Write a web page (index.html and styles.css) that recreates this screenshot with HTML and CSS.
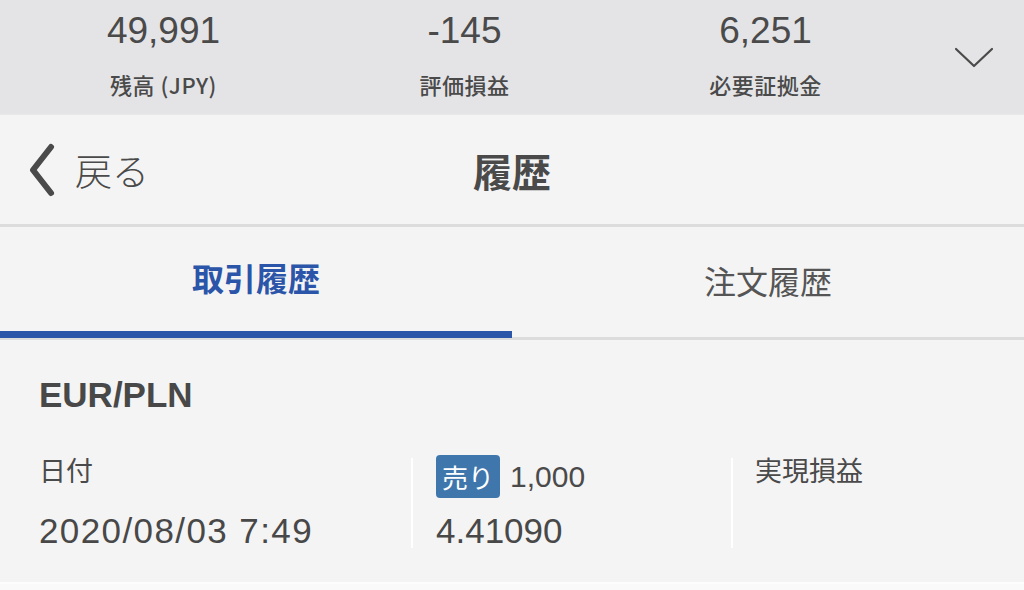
FILE: index.html
```html
<!DOCTYPE html>
<html lang="ja">
<head>
<meta charset="utf-8">
<link rel="stylesheet" href="styles.css">
</head>
<body>
<div class="summary">
  <div class="stat"><div class="num">49,991</div><div class="label">残高 (JPY)</div></div>
  <div class="stat"><div class="num">-145</div><div class="label">評価損益</div></div>
  <div class="stat"><div class="num">6,251</div><div class="label">必要証拠金</div></div>
  <div class="toggle">
    <svg width="40" height="22" viewBox="0 0 40 22"><path d="M2 2 L20 19 L38 2" fill="none" stroke="#4a4a4a" stroke-width="2.2" stroke-linecap="round" stroke-linejoin="round"/></svg>
  </div>
</div>
<div class="navbar">
  <div class="back">
    <svg width="30" height="54" viewBox="0 0 30 54"><path d="M24 4 L6 27 L24 50" fill="none" stroke="#4a4a4a" stroke-width="6" stroke-linecap="round" stroke-linejoin="round"/></svg>
    <span>戻る</span>
  </div>
  <div class="title">履歴</div>
</div>
<div class="tabs">
  <div class="tab active">取引履歴</div>
  <div class="tab">注文履歴</div>
</div>
<div class="card">
  <div class="pair">EUR/PLN</div>
  <div class="cols">
    <div class="col first">
      <div class="lbl">日付</div>
      <div class="val date">2020/08/03 7:49</div>
    </div>
    <div class="col mid">
      <div class="lbl row"><span class="badge">売り</span><span class="qty">1,000</span></div>
      <div class="val">4.41090</div>
    </div>
    <div class="col last">
      <div class="lbl">実現損益</div>
    </div>
  </div>
</div>
<div class="bottom"></div>
</body>
</html>
```
FILE: styles.css
```css
html, body {
  margin: 0;
  padding: 0;
}
body {
  width: 1024px;
  height: 590px;
  overflow: hidden;
  background: #f4f4f4;
  font-family: "Liberation Sans", "Noto Sans CJK JP", sans-serif;
  color: #4a4a4a;
}
.summary {
  height: 114px;
  background: #e4e4e6;
  display: grid;
  grid-template-columns: 301px 301px 301px 1fr;
  padding-left: 13px;
  border-bottom: 1px solid #e8e8e8;
}
.stat {
  display: flex;
  flex-direction: column;
  align-items: center;
}
.num {
  font-size: 37px;
  line-height: 40px;
  margin-top: 11px;
  color: #4a4a4a;
}
.label {
  font-family: "Noto Sans CJK JP", sans-serif;
  font-size: 22px;
  font-weight: 500;
  line-height: 30px;
  margin-top: 18px;
  color: #4a4a4a;
  letter-spacing: 0.5px;
}
.toggle {
  display: flex;
  justify-content: flex-end;
  padding-right: 30px;
  padding-top: 47px;
}
.navbar {
  height: 109px;
  border-bottom: 3px solid #dcdcdc;
  display: flex;
  align-items: center;
  position: relative;
  background: #f4f4f4;
}
.back {
  display: flex;
  align-items: center;
  padding-left: 27px;
  gap: 18px;
}
.back span {
  font-family: "Noto Sans CJK JP", sans-serif;
  font-size: 37px;
  font-weight: 300;
  color: #4a4a4a;
}
.title {
  position: absolute;
  left: 0;
  right: 0;
  text-align: center;
  font-family: "Noto Sans CJK JP", sans-serif;
  font-size: 39px;
  font-weight: 700;
  color: #4a4a4a;
  pointer-events: none;
}
.tabs {
  display: grid;
  grid-template-columns: 512px 512px;
  height: 110px;
  border-bottom: 3px solid #dcdcdc;
  background: #f4f4f4;
}
.tab {
  display: flex;
  align-items: center;
  justify-content: center;
  padding-bottom: 4px;
  font-family: "Noto Sans CJK JP", sans-serif;
  font-size: 32px;
  color: #555;
  font-weight: 400;
  box-sizing: border-box;
}
.tab.active {
  color: #2b55a8;
  font-weight: 700;
  border-bottom: 7px solid #2b55a8;
  margin-bottom: -1px;
}
.card {
  height: 242px;
  background: #f4f4f4;
  box-sizing: border-box;
  padding: 0 0 0 39px;
}
.pair {
  padding-top: 34px;
  font-size: 35px;
  font-weight: 700;
  line-height: 42px;
  color: #484848;
}
.cols {
  display: grid;
  grid-template-columns: 372px 320px 1fr;
  margin-top: 42px;
}
.col {
  height: 90px;
  display: flex;
  flex-direction: column;
}
.col.mid, .col.last {
  border-left: 2px solid #ffffff;
  padding-left: 23px;
}
.col.last {
  padding-left: 22px;
}
.lbl {
  font-family: "Noto Sans CJK JP", sans-serif;
  font-size: 27px;
  line-height: 30px;
  color: #4a4a4a;
  margin-top: -3px;
}
.lbl.row {
  display: flex;
  align-items: center;
  gap: 10px;
  margin-top: -3px;
}
.badge {
  background: #3f77ad;
  color: #fff;
  border-radius: 4px;
  font-size: 26px;
  line-height: 43px;
  height: 43px;
  padding: 0 6px;
}
.qty {
  font-family: "Liberation Sans", sans-serif;
  font-size: 30px;
}
.val {
  font-size: 35px;
  line-height: 40px;
  margin-top: 26px;
  color: #484848;
}
.val.date {
  letter-spacing: 1.4px;
}
.lbl.row + .val {
  margin-top: 13px;
}
.bottom {
  height: 8px;
  background: #fafafa;
  border-top: 2px solid #fdfdfd;
}
```
